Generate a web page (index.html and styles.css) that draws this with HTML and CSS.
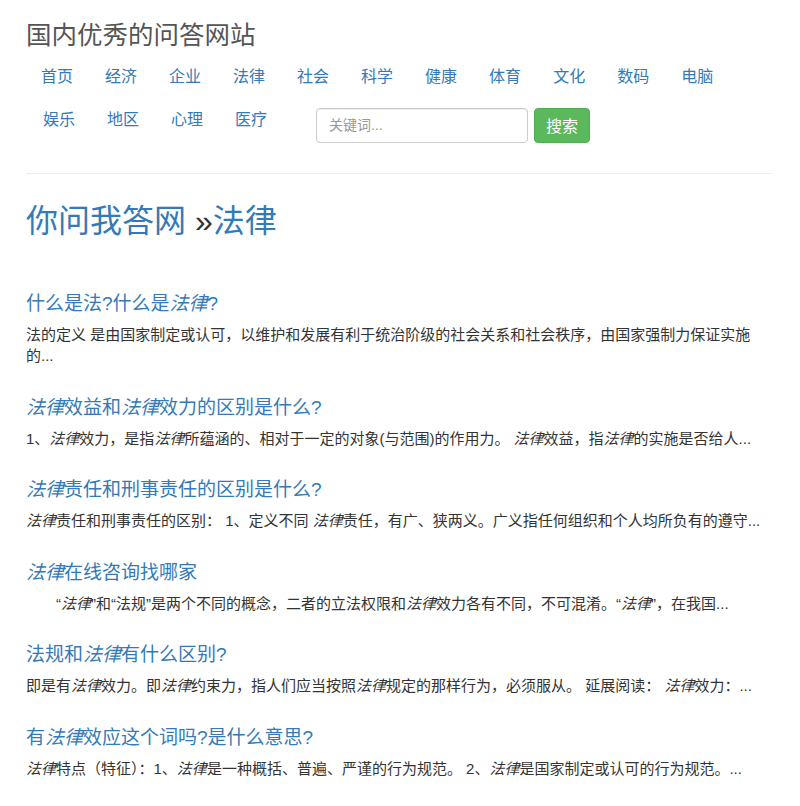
FILE: index.html
```html
<!DOCTYPE html>
<html lang="zh-CN">
<head>
<meta charset="utf-8">
<title>你问我答网 »法律</title>
<link rel="stylesheet" href="styles.css">
</head>
<body>
<div class="page">
  <header class="header">
    <div class="site-title">国内优秀的问答网站</div>
    <ul class="nav">
      <li><a href="#">首页</a></li>
      <li><a href="#">经济</a></li>
      <li><a href="#">企业</a></li>
      <li><a href="#">法律</a></li>
      <li><a href="#">社会</a></li>
      <li><a href="#">科学</a></li>
      <li><a href="#">健康</a></li>
      <li><a href="#">体育</a></li>
      <li><a href="#">文化</a></li>
      <li><a href="#">数码</a></li>
      <li><a href="#">电脑</a></li>
      <li><a href="#">娱乐</a></li>
      <li><a href="#">地区</a></li>
      <li><a href="#">心理</a></li>
      <li><a href="#">医疗</a></li>
      <li class="search">
        <form class="search-form">
          <input class="search-input" type="text" placeholder="关键词...">
          <button class="search-btn" type="button">搜索</button>
        </form>
      </li>
    </ul>
  </header>
  <hr class="divider">
  <h1 class="page-title"><a href="#">你问我答网</a> »<a href="#">法律</a></h1>
  <div class="list">
    <div class="item">
      <h4 class="item-title"><a href="#">什么是法?什么是<em>法律</em>?</a></h4>
      <p class="item-desc">法的定义 是由国家制定或认可，以维护和发展有利于统治阶级的社会关系和社会秩序，由国家强制力保证实施的...</p>
    </div>
    <div class="item">
      <h4 class="item-title"><a href="#"><em>法律</em>效益和<em>法律</em>效力的区别是什么?</a></h4>
      <p class="item-desc">1、<em>法律</em>效力，是指<em>法律</em>所蕴涵的、相对于一定的对象(与范围)的作用力。 <em>法律</em>效益，指<em>法律</em>的实施是否给人...</p>
    </div>
    <div class="item">
      <h4 class="item-title"><a href="#"><em>法律</em>责任和刑事责任的区别是什么?</a></h4>
      <p class="item-desc"><em>法律</em>责任和刑事责任的区别： 1、定义不同 <em>法律</em>责任，有广、狭两义。广义指任何组织和个人均所负有的遵守...</p>
    </div>
    <div class="item">
      <h4 class="item-title"><a href="#"><em>法律</em>在线咨询找哪家</a></h4>
      <p class="item-desc">　　“<em>法律</em>”和“法规”是两个不同的概念，二者的立法权限和<em>法律</em>效力各有不同，不可混淆。“<em>法律</em>”，在我国...</p>
    </div>
    <div class="item">
      <h4 class="item-title"><a href="#">法规和<em>法律</em>有什么区别?</a></h4>
      <p class="item-desc">即是有<em>法律</em>效力。即<em>法律</em>约束力，指人们应当按照<em>法律</em>规定的那样行为，必须服从。 延展阅读： <em>法律</em>效力：...</p>
    </div>
    <div class="item">
      <h4 class="item-title"><a href="#">有<em>法律</em>效应这个词吗?是什么意思?</a></h4>
      <p class="item-desc"><em>法律</em>特点（特征）：1、<em>法律</em>是一种概括、普遍、严谨的行为规范。 2、<em>法律</em>是国家制定或认可的行为规范。...</p>
    </div>
  </div>
</div>
</body>
</html>
```

FILE: styles.css
```css
* {
  box-sizing: border-box;
}

html, body {
  margin: 0;
  padding: 0;
  background: #fff;
}

body {
  font-family: "Liberation Sans", "Noto Sans CJK SC", sans-serif;
  color: #333;
  font-size: 15px;
  line-height: 1.42857;
}

a {
  color: #337ab7;
  text-decoration: none;
}

.page {
  padding: 0 27px 0 26px;
}

.site-title {
  margin: 0;
  padding-top: 21px;
  font-size: 25.5px;
  line-height: 28px;
  color: #555;
  font-weight: normal;
}

.nav {
  margin: 7px 0 0;
  padding: 0;
  list-style: none;
  display: flex;
  flex-wrap: wrap;
  align-items: flex-start;
}

.nav li + li {
  margin-left: 2px;
}

.nav a {
  display: block;
  padding: 10px 15px;
  font-size: 16px;
  line-height: 22.86px;
  border-radius: 4px;
}

.nav li.search {
  margin-left: 34px;
  margin-top: 9px;
}

.search-form {
  display: flex;
  gap: 6px;
}

.search-input {
  width: 212px;
  height: 35px;
  padding: 6px 12px;
  font-family: inherit;
  font-size: 14px;
  color: #555;
  border: 1px solid #ccc;
  border-radius: 4px;
  box-shadow: inset 0 1px 1px rgba(0, 0, 0, 0.075);
  outline: none;
}

.search-input::placeholder {
  color: #999;
}

.search-btn {
  height: 35px;
  padding: 0 11px;
  font-family: inherit;
  font-size: 16px;
  color: #fff;
  background: #5cb85c;
  border: 1px solid #4cae4c;
  border-radius: 4px;
}

.divider {
  margin: 30px 0 0;
  border: 0;
  border-top: 1px solid #eee;
  height: 0;
}

.page-title {
  margin: 30px 0 44px;
  font-size: 32px;
  line-height: 1.1;
  font-weight: normal;
  color: #333;
}

.item {
  display: flow-root;
  margin-bottom: 10px;
}

.item-title {
  margin: 10px 0;
  font-size: 19px;
  line-height: 21px;
  font-weight: normal;
}

.item-desc {
  margin: 0 0 10px;
  font-size: 15px;
  line-height: 1.42857;
  color: #333;
}

em {
  font-style: italic;
}
```
